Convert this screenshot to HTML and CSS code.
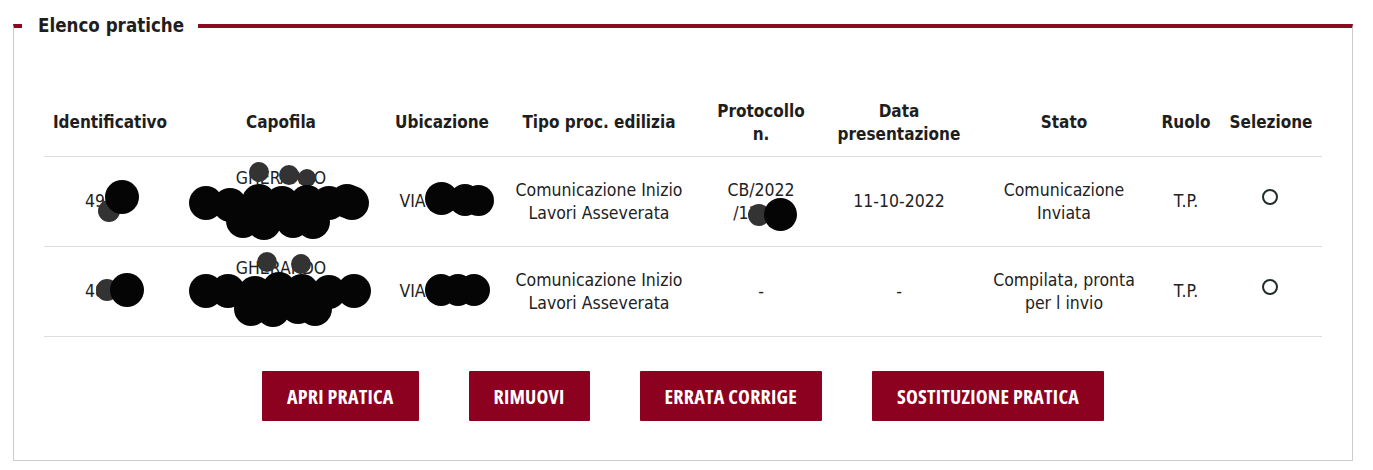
FILE: index.html
```html
<!DOCTYPE html>
<html lang="it">
<head>
<meta charset="utf-8">
<title>Elenco pratiche</title>
<link rel="stylesheet" href="styles.css">
</head>
<body>
<fieldset class="panel">
  <legend class="panel-title">Elenco pratiche</legend>
  <table class="grid">
    <colgroup>
      <col class="c-id"><col class="c-capo"><col class="c-ubi"><col class="c-tipo"><col class="c-prot"><col class="c-data"><col class="c-stato"><col class="c-ruolo"><col class="c-sel">
    </colgroup>
    <thead>
      <tr>
        <th>Identificativo</th>
        <th>Capofila</th>
        <th>Ubicazione</th>
        <th>Tipo proc. edilizia</th>
        <th>Protocollo<br>n.</th>
        <th>Data<br>presentazione</th>
        <th>Stato</th>
        <th>Ruolo</th>
        <th>Selezione</th>
      </tr>
    </thead>
    <tbody>
      <tr>
        <td>49000</td>
        <td>GHERARDO<br>XXXXXXXXXXX<br>XXXXXXXX</td>
        <td>VIA XXXXX</td>
        <td>Comunicazione Inizio<br>Lavori Asseverata</td>
        <td>CB/2022<br>/11300</td>
        <td>11-10-2022</td>
        <td>Comunicazione<br>Inviata</td>
        <td>T.P.</td>
        <td><span class="radio"></span></td>
      </tr>
      <tr>
        <td>48700</td>
        <td>GHERARDO<br>XXXXXXXXXXX<br>XXXXXXXX</td>
        <td>VIA XXXXX</td>
        <td>Comunicazione Inizio<br>Lavori Asseverata</td>
        <td>-</td>
        <td>-</td>
        <td>Compilata, pronta<br>per l invio</td>
        <td>T.P.</td>
        <td><span class="radio"></span></td>
      </tr>
    </tbody>
  </table>
  <div class="actions">
    <button class="btn">APRI PRATICA</button>
    <button class="btn">RIMUOVI</button>
    <button class="btn">ERRATA CORRIGE</button>
    <button class="btn">SOSTITUZIONE PRATICA</button>
  </div>
</fieldset>

<div class="redactions" aria-hidden="true">
  <!-- row 1 -->
  <span class="dot g" style="left:98px;top:200px;width:22px;height:22px"></span>
  <span class="dot" style="left:105px;top:180px;width:34px;height:34px"></span>
  <span class="dot g" style="left:249px;top:162px;width:20px;height:20px"></span>
  <span class="dot g" style="left:279px;top:165px;width:20px;height:20px"></span>
  <span class="dot g" style="left:298px;top:169px;width:18px;height:18px"></span>
  <span class="dot" style="left:189px;top:186px;width:34px;height:34px"></span>
  <span class="dot" style="left:213px;top:188px;width:34px;height:34px"></span>
  <span class="dot" style="left:242px;top:184px;width:34px;height:34px"></span>
  <span class="dot" style="left:265px;top:186px;width:34px;height:34px"></span>
  <span class="dot" style="left:290px;top:185px;width:34px;height:34px"></span>
  <span class="dot" style="left:312px;top:186px;width:34px;height:34px"></span>
  <span class="dot" style="left:330px;top:184px;width:34px;height:34px"></span>
  <span class="dot" style="left:335px;top:186px;width:34px;height:34px"></span>
  <span class="dot" style="left:226px;top:204px;width:34px;height:34px"></span>
  <span class="dot" style="left:247px;top:206px;width:34px;height:34px"></span>
  <span class="dot" style="left:276px;top:204px;width:34px;height:34px"></span>
  <span class="dot" style="left:296px;top:205px;width:34px;height:34px"></span>
  <span class="dot" style="left:425px;top:182px;width:33px;height:33px"></span>
  <span class="dot" style="left:449px;top:184px;width:32px;height:32px"></span>
  <span class="dot" style="left:463px;top:185px;width:31px;height:31px"></span>
  <span class="dot g" style="left:748px;top:204px;width:22px;height:22px"></span>
  <span class="dot" style="left:764px;top:198px;width:33px;height:33px"></span>
  <!-- row 2 -->
  <span class="dot g" style="left:96px;top:279px;width:22px;height:22px"></span>
  <span class="dot" style="left:110px;top:273px;width:34px;height:34px"></span>
  <span class="dot g" style="left:257px;top:252px;width:20px;height:20px"></span>
  <span class="dot g" style="left:291px;top:254px;width:20px;height:20px"></span>
  <span class="dot" style="left:189px;top:274px;width:34px;height:34px"></span>
  <span class="dot" style="left:211px;top:274px;width:34px;height:34px"></span>
  <span class="dot" style="left:238px;top:276px;width:34px;height:34px"></span>
  <span class="dot" style="left:262px;top:272px;width:34px;height:34px"></span>
  <span class="dot" style="left:285px;top:274px;width:34px;height:34px"></span>
  <span class="dot" style="left:312px;top:275px;width:34px;height:34px"></span>
  <span class="dot" style="left:337px;top:274px;width:34px;height:34px"></span>
  <span class="dot" style="left:234px;top:292px;width:34px;height:34px"></span>
  <span class="dot" style="left:256px;top:293px;width:34px;height:34px"></span>
  <span class="dot" style="left:281px;top:290px;width:34px;height:34px"></span>
  <span class="dot" style="left:298px;top:292px;width:34px;height:34px"></span>
  <span class="dot" style="left:425px;top:274px;width:32px;height:32px"></span>
  <span class="dot" style="left:442px;top:274px;width:32px;height:32px"></span>
  <span class="dot" style="left:458px;top:274px;width:32px;height:32px"></span>
</div>
</body>
</html>
```

FILE: styles.css
```css
html, body {
  margin: 0;
  padding: 0;
  background: #ffffff;
}
body {
  position: relative;
  font-family: "DejaVu Sans Condensed", "DejaVu Sans", sans-serif;
  color: #222222;
}
.panel {
  box-sizing: border-box;
  width: 1340px;
  height: 448px;
  margin: 13px 0 0 13px;
  padding: 50px 30px 0 30px;
  border: 1px solid #cccccc;
  border-top: 4px solid #8a0a1f;
  min-width: 0;
}
.panel-title {
  margin-left: -22px;
  padding: 0 14px 0 16px;
  font-size: 18.6px;
  line-height: 26px;
  font-weight: bold;
  color: #1e1e1e;
  background: #ffffff;
}
.grid {
  width: 1278px;
  border-collapse: collapse;
  table-layout: fixed;
}
.c-id { width: 132px; }
.c-capo { width: 210px; }
.c-ubi { width: 112px; }
.c-tipo { width: 202px; }
.c-prot { width: 122px; }
.c-data { width: 154px; }
.c-stato { width: 176px; }
.c-ruolo { width: 68px; }
.c-sel { width: 102px; }
.grid th {
  font-size: 17px;
  line-height: 23px;
  font-weight: bold;
  color: #1e1e1e;
  text-align: center;
  vertical-align: middle;
  white-space: nowrap;
  height: 67px;
  padding: 0;
  border-bottom: 1px solid #dddddd;
}
.grid td {
  font-size: 17.5px;
  line-height: 23px;
  text-align: center;
  vertical-align: middle;
  white-space: nowrap;
  height: 89px;
  padding: 0;
  border-bottom: 1px solid #dddddd;
  color: #222222;
}
.radio {
  display: inline-block;
  box-sizing: border-box;
  width: 16px;
  height: 16px;
  border: 2px solid #1f2f27;
  border-radius: 50%;
  vertical-align: middle;
  position: relative;
  top: -5px;
  left: -1px;
}
.actions {
  display: flex;
  justify-content: center;
  gap: 50px;
  margin-top: 34px;
}
.btn {
  font-family: "Open Sans", "DejaVu Sans Condensed", sans-serif;
  font-stretch: 82%;
  font-size: 20px;
  font-weight: bold;
  letter-spacing: 0.2px;
  color: #ffffff;
  background: #8c0020;
  border: none;
  border-radius: 1px;
  height: 50px;
  padding: 0 25px;
  cursor: pointer;
}
.redactions {
  position: absolute;
  left: 0;
  top: 0;
  width: 0;
  height: 0;
}
.dot {
  position: absolute;
  border-radius: 50%;
  background: #050505;
}
.dot.g {
  background: #333333;
}
```
